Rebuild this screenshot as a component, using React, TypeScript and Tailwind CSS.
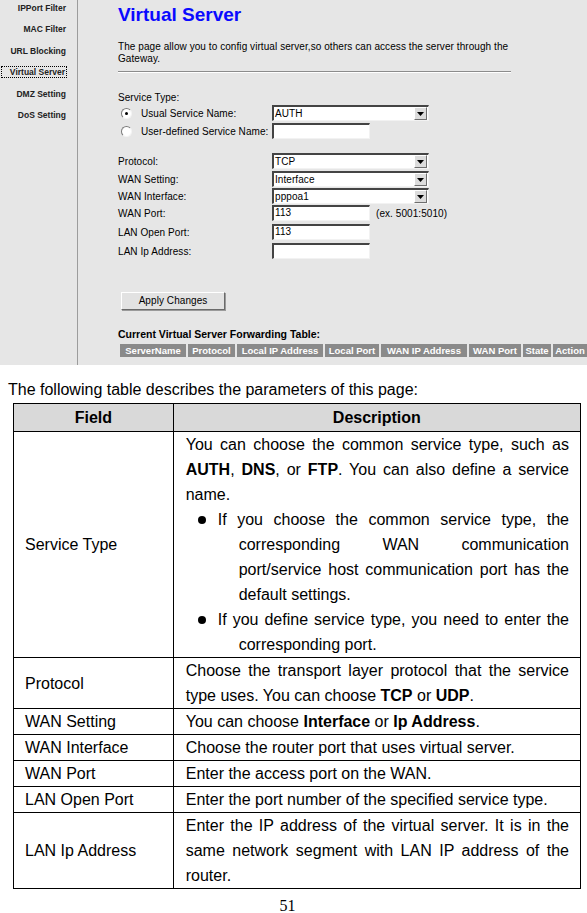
import React from 'react'

const NAV = ['IPPort Filter', 'MAC Filter', 'URL Blocking', 'Virtual Server', 'DMZ Setting', 'DoS Setting']

const TABLE_HEAD: [string, string][] = [
  ['ServerName', 'w-[66px]'],
  ['Protocol', 'w-[47px]'],
  ['Local IP Address', 'w-[86px]'],
  ['Local Port', 'w-[54px]'],
  ['WAN IP Address', 'w-[86px]'],
  ['WAN Port', 'w-[52px]'],
  ['State', 'w-[28px]'],
  ['Action', 'w-[34px]'],
]

function Radio({ checked }: { checked?: boolean }) {
  return (
    <span className="relative inline-block w-[11px] h-[11px] rounded-full bg-white border border-t-[#7a7a7a] border-l-[#7a7a7a] border-b-[#f4f4f4] border-r-[#f4f4f4] shrink-0">
      {checked ? <span className="absolute left-[3px] top-[3px] w-[3px] h-[3px] rounded-full bg-black" /> : null}
    </span>
  )
}

function Select({ value }: { value: string }) {
  return (
    <div className="flex items-center w-[157px] h-[16px] bg-white border-t-2 border-l-2 border-t-[#444] border-l-[#444] border-b border-r border-b-[#f2f2f2] border-r-[#f2f2f2] pl-[1px]">
      <span className="flex-1 leading-[12px]">{value}</span>
      <span className="w-[13px] h-[13px] mr-[1px] bg-[#dcdcdc] border border-t-white border-l-white border-b-[#6e6e6e] border-r-[#6e6e6e] grid place-items-center">
        <svg width="7" height="4" viewBox="0 0 7 4"><path d="M0 0h7L3.5 4z" fill="#000" /></svg>
      </span>
    </div>
  )
}

function TextBox({ value = '' }: { value?: string }) {
  return (
    <div className="w-[98px] h-[16px] bg-white border-t-2 border-l-2 border-t-[#444] border-l-[#444] border-b border-r border-b-[#f2f2f2] border-r-[#f2f2f2] pl-[1px] leading-[12px]">
      {value}
    </div>
  )
}

function Row({ label, mt, children }: { label: string; mt: string; children: React.ReactNode }) {
  return (
    <div className={`flex items-center h-[16px] ${mt}`}>
      <span className="w-[154px] shrink-0">{label}</span>
      {children}
    </div>
  )
}

// justified line (forced break, still spread to the cell edge)
function J({ children }: { children: React.ReactNode }) {
  return <div className="text-justify [text-align-last:justify]">{children}</div>
}

function Bullet({ children }: { children: React.ReactNode }) {
  return <div className="pl-[53px]">{children}</div>
}

function BulletFirst({ children }: { children: React.ReactNode }) {
  return (
    <div className="flex pl-[12px]">
      <span className="w-[20px] shrink-0 flex items-center">
        <span className="w-[8px] h-[8px] rounded-full bg-black" />
      </span>
      <div className="flex-1">{children}</div>
    </div>
  )
}

export default function App() {
  return (
    <div className="w-[587px] bg-white font-['Liberation_Sans',Arial,sans-serif] text-black">
      {/* router page screenshot */}
      <div className="flex bg-[#e6e6e6] h-[365px] text-[10px]">
        <div className="w-[78px] shrink-0 border-r border-[#9c9c9c] flex flex-col gap-[9.4px] pt-[2px] text-[8.5px] font-bold text-[#222]">
          {NAV.map((n) =>
            n === 'Virtual Server' ? (
              <div key={n} className="h-[12px] leading-[10px] ml-[1px] mr-[10px] border border-dotted border-black text-right pr-[1px]">
                {n}
              </div>
            ) : (
              <div key={n} className="h-[12px] leading-[12px] text-right pr-[11px]">
                {n}
              </div>
            ),
          )}
        </div>

        <div className="flex-1 pl-[40px] tracking-[0.07px]">
          <div className="mt-[4px] h-[22px] leading-[22px] text-[19px] font-bold text-[#0a0aff] tracking-normal">Virtual Server</div>
          <div className="mt-[15px] leading-[12px] w-[420px]">
            The page allow you to config virtual server,so others can access the server through the
            <br />
            Gateway.
          </div>
          <div className="mt-[6px] w-[393px] h-[2px] border-t border-[#8c8c8c] border-b border-b-white" />

          <div className="mt-[19px] h-[12px] leading-[12px]">Service Type:</div>
          <div className="flex items-center h-[16px] mt-[1px]">
            <span className="w-[154px] shrink-0 flex items-center pl-[3px]">
              <Radio checked />
              <span className="ml-[9px]">Usual Service Name:</span>
            </span>
            <Select value="AUTH" />
          </div>
          <div className="flex items-center h-[16px] mt-[2px]">
            <span className="w-[154px] shrink-0 flex items-center pl-[3px]">
              <Radio />
              <span className="ml-[9px]">User-defined Service Name:</span>
            </span>
            <TextBox />
          </div>

          <Row label="Protocol:" mt="mt-[14px]"><Select value="TCP" /></Row>
          <Row label="WAN Setting:" mt="mt-[2px]"><Select value="Interface" /></Row>
          <Row label="WAN Interface:" mt="mt-[1px]"><Select value="pppoa1" /></Row>
          <Row label="WAN Port:" mt="mt-[1px]">
            <TextBox value="113" />
            <span className="ml-[6px]">(ex. 5001:5010)</span>
          </Row>
          <Row label="LAN Open Port:" mt="mt-[3px]"><TextBox value="113" /></Row>
          <Row label="LAN Ip Address:" mt="mt-[3px]"><TextBox /></Row>

          <button
            type="button"
            className="mt-[33px] ml-[3px] w-[104px] h-[18px] bg-[#e2e2e2] border border-t-white border-l-white border-b-[#6a6a6a] border-r-[#6a6a6a] shadow-[1px_1px_0_#9a9a9a] text-[10px] leading-[14px] block"
          >
            Apply Changes
          </button>

          <div className="mt-[18px] h-[12px] leading-[12px] font-bold text-[10.5px] tracking-normal">Current Virtual Server Forwarding Table:</div>
          <div className="mt-[4px] ml-[2px] flex gap-[2px] tracking-normal">
            {TABLE_HEAD.map(([t, w]) => (
              <div key={t} className={`${w} h-[13px] bg-[#8a8a8a] text-white font-bold text-[9.5px] leading-[13px] text-center whitespace-nowrap overflow-hidden`}>
                {t}
              </div>
            ))}
          </div>
        </div>
      </div>

      <div className="mt-[15px] pl-[8px] text-[16px] leading-[20px]">The following table describes the parameters of this page:</div>

      <table className="mt-[3px] ml-[13px] w-[568px] border-collapse text-[16px] leading-[25px]">
        <colgroup>
          <col className="w-[160px]" />
          <col className="w-[408px]" />
        </colgroup>
        <thead>
          <tr className="bg-[#d9d9d9] h-[28px]">
            <th className="border border-black font-bold text-center">Field</th>
            <th className="border border-black font-bold text-center">Description</th>
          </tr>
        </thead>
        <tbody>
          <tr>
            <td className="border border-black pl-[11px] align-middle">Service Type</td>
            <td className="border border-black pl-[12px] pr-[11px] align-top">
              <J>You can choose the common service type, such as</J>
              <J>
                <b>AUTH</b>, <b>DNS</b>, or <b>FTP</b>. You can also define a service
              </J>
              <div>name.</div>
              <BulletFirst>
                <J>If you choose the common service type, the</J>
              </BulletFirst>
              <Bullet>
                <J>corresponding WAN communication</J>
                <J>port/service host communication port has the</J>
                <div>default settings.</div>
              </Bullet>
              <BulletFirst>
                <J>If you define service type, you need to enter the</J>
              </BulletFirst>
              <Bullet>
                <div>corresponding port.</div>
              </Bullet>
            </td>
          </tr>
          <tr>
            <td className="border border-black pl-[11px]">Protocol</td>
            <td className="border border-black pl-[12px] pr-[11px]">
              <J>Choose the transport layer protocol that the service</J>
              <div>
                type uses. You can choose <b>TCP</b> or <b>UDP</b>.
              </div>
            </td>
          </tr>
          <tr>
            <td className="border border-black pl-[11px]">WAN Setting</td>
            <td className="border border-black pl-[12px] pr-[11px]">
              You can choose <b>Interface</b> or <b>Ip Address</b>.
            </td>
          </tr>
          <tr>
            <td className="border border-black pl-[11px]">WAN Interface</td>
            <td className="border border-black pl-[12px] pr-[11px]">Choose the router port that uses virtual server.</td>
          </tr>
          <tr>
            <td className="border border-black pl-[11px]">WAN Port</td>
            <td className="border border-black pl-[12px] pr-[11px]">Enter the access port on the WAN.</td>
          </tr>
          <tr>
            <td className="border border-black pl-[11px]">LAN Open Port</td>
            <td className="border border-black pl-[12px] pr-[11px]">Enter the port number of the specified service type.</td>
          </tr>
          <tr>
            <td className="border border-black pl-[11px]">LAN Ip Address</td>
            <td className="border border-black pl-[12px] pr-[11px]">
              <J>Enter the IP address of the virtual server. It is in the</J>
              <J>same network segment with LAN IP address of the</J>
              <div>router.</div>
            </td>
          </tr>
        </tbody>
      </table>

      <div className="mt-[9px] text-center pr-[12px] font-['Liberation_Serif',serif] text-[16px] leading-[16px]">51</div>
    </div>
  )
}
